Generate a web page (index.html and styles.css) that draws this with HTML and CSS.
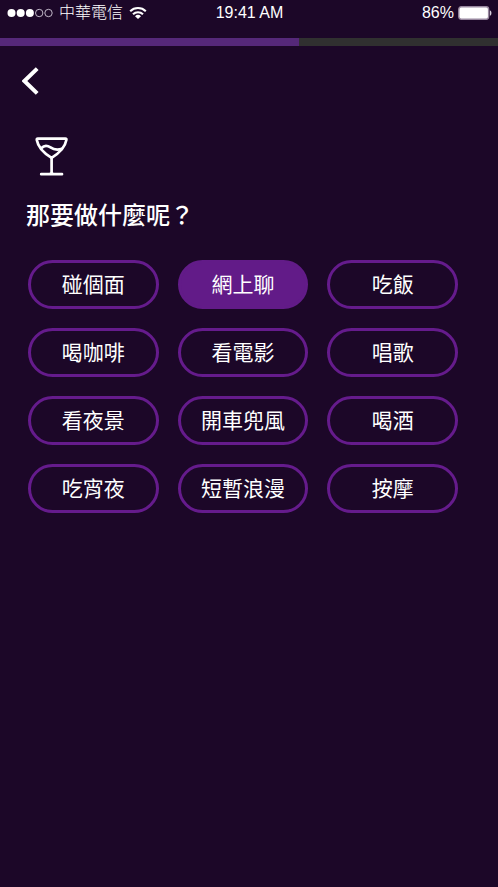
FILE: index.html
```html
<!DOCTYPE html>
<html lang="zh-Hant">
<head>
<meta charset="utf-8">
<meta name="viewport" content="width=device-width, initial-scale=1">
<title>那要做什麼呢？</title>
<link rel="stylesheet" href="styles.css">
</head>
<body>
<header class="status">
  <div class="status-left">
    <svg class="signal" width="46" height="10" viewBox="0 0 46 10" aria-hidden="true">
      <g fill="#fff"><circle cx="4.5" cy="5" r="4"/><circle cx="13.7" cy="5" r="4"/><circle cx="22.9" cy="5" r="4"/></g>
      <g fill="none" stroke="#d4ccda" stroke-width=".9"><circle cx="32.2" cy="5" r="3.7"/><circle cx="41.5" cy="5" r="3.7"/></g>
    </svg>
    <span class="carrier">中華電信</span>
    <svg class="wifi" width="18" height="14" viewBox="0 0 18 14" aria-hidden="true">
      <g fill="none" stroke="#fff" stroke-width="2.1"><path d="M1.2 5.2a11.2 11.2 0 0 1 15.6 0"/><path d="M4 8.2a7.2 7.2 0 0 1 10 0"/></g>
      <path fill="#fff" d="M9 13 6 10.2a4.3 4.3 0 0 1 6 0z"/>
    </svg>
  </div>
  <span class="clock">19:41 AM</span>
  <div class="status-right">
    <span>86%</span>
    <svg class="battery" width="34" height="14" viewBox="0 0 34 14" aria-hidden="true">
      <rect x=".8" y=".8" width="29.8" height="12.4" rx="2.4" fill="#fff" stroke="#98879f" stroke-width="1.4"/>
      <path fill="#d8d0dc" d="M31.8 4.2c2.2.6 2.2 5 0 5.6z"/>
    </svg>
  </div>
</header>
<div class="progress" role="progressbar" aria-valuenow="60" aria-valuemin="0" aria-valuemax="100" aria-label="進度"><div class="progress-fill"></div></div>
<main class="content">
  <button class="back" type="button" aria-label="返回">
    <svg width="18" height="30" viewBox="0 0 18 30" aria-hidden="true"><path d="M15.2 2.6 2.4 15l12.8 12.4" fill="none" stroke="#fff" stroke-width="4"/></svg>
  </button>
  <svg class="glass" width="34" height="40" viewBox="0 0 34 40" fill="none" stroke="#fff" stroke-width="2.7" stroke-linecap="round" stroke-linejoin="round" aria-hidden="true">
    <path d="M2.8 2.6h27.6q1.200 0 1 1.300C30 12 24 17.300 16.600 21.800 9.200 17.300 3.200 12 1.800 3.900q-.2-1.300 1-1.300z"/>
    <path d="M6.500 12C9 9.300 12.500 9.400 15.500 11.400c3.500 2.500 7 2.700 11.300 1.500"/>
    <path d="M16.600 21.800V37M6.200 38.200h20.800"/>
    <path d="M12.500 37.800c2.500-.3 3.500-1 4.100-2.200.6 1.200 1.600 1.900 4.100 2.200z" fill="#fff" stroke-width=".6"/>
  </svg>
  <h1 class="title">那要做什麼呢？</h1>
  <div class="options">
    <button class="option" type="button">碰個面</button>
    <button class="option selected" type="button" aria-pressed="true">網上聊</button>
    <button class="option" type="button">吃飯</button>
    <button class="option" type="button">喝咖啡</button>
    <button class="option" type="button">看電影</button>
    <button class="option" type="button">唱歌</button>
    <button class="option" type="button">看夜景</button>
    <button class="option" type="button">開車兜風</button>
    <button class="option" type="button">喝酒</button>
    <button class="option" type="button">吃宵夜</button>
    <button class="option" type="button">短暫浪漫</button>
    <button class="option" type="button">按摩</button>
  </div>
</main>
</body>
</html>
```
FILE: styles.css
```css
* {
  box-sizing: border-box;
}

body {
  margin: 0;
  min-height: 100vh;
  background: #1c0728;
  color: #fff;
  font-family: "Liberation Sans", "Noto Sans CJK TC", sans-serif;
}

.status {
  display: grid;
  grid-template-columns: 1fr auto 1fr;
  align-items: center;
  height: 38px;
  padding: 0 6px 12px 7px;
  font-size: 16px;
  line-height: 24px;
}

.status-left,
.status-right {
  display: flex;
  align-items: center;
  gap: 6px;
}

.status-right {
  justify-content: flex-end;
  gap: 4px;
}

.carrier {
  padding-bottom: 4px;
  font-family: "Noto Sans CJK TC", sans-serif;
  font-weight: 300;
  line-height: 20px;
}

.progress {
  height: 8px;
  background: #303030;
}

.progress-fill {
  width: 60%;
  height: 100%;
  background: #552879;
}

.content {
  display: flex;
  flex-direction: column;
  align-items: flex-start;
  padding: 20px 40px 40px 28px;
}

.back {
  display: flex;
  margin-left: -8px;
  padding: 0 2px;
  border: 0;
  background: none;
}

.glass {
  margin: 40px 0 0 7px;
}

.title {
  margin: 20px 0 0 -2px;
  font-family: "Noto Sans CJK TC", sans-serif;
  font-size: 24px;
  font-weight: 500;
  line-height: 36px;
}

.options {
  display: grid;
  grid-template-columns: repeat(3, 1fr);
  gap: 19px;
  align-self: stretch;
  margin-top: 28px;
}

.option {
  height: 49px;
  padding: 0 0 4px;
  border: 3px solid #651b8c;
  border-radius: 25px;
  background: none;
  color: #fff;
  font-family: "Noto Sans CJK TC", sans-serif;
  font-size: 21px;
  line-height: 30px;
  white-space: nowrap;
}

.selected {
  border-color: #621b88;
  background: #621b88;
}
```
